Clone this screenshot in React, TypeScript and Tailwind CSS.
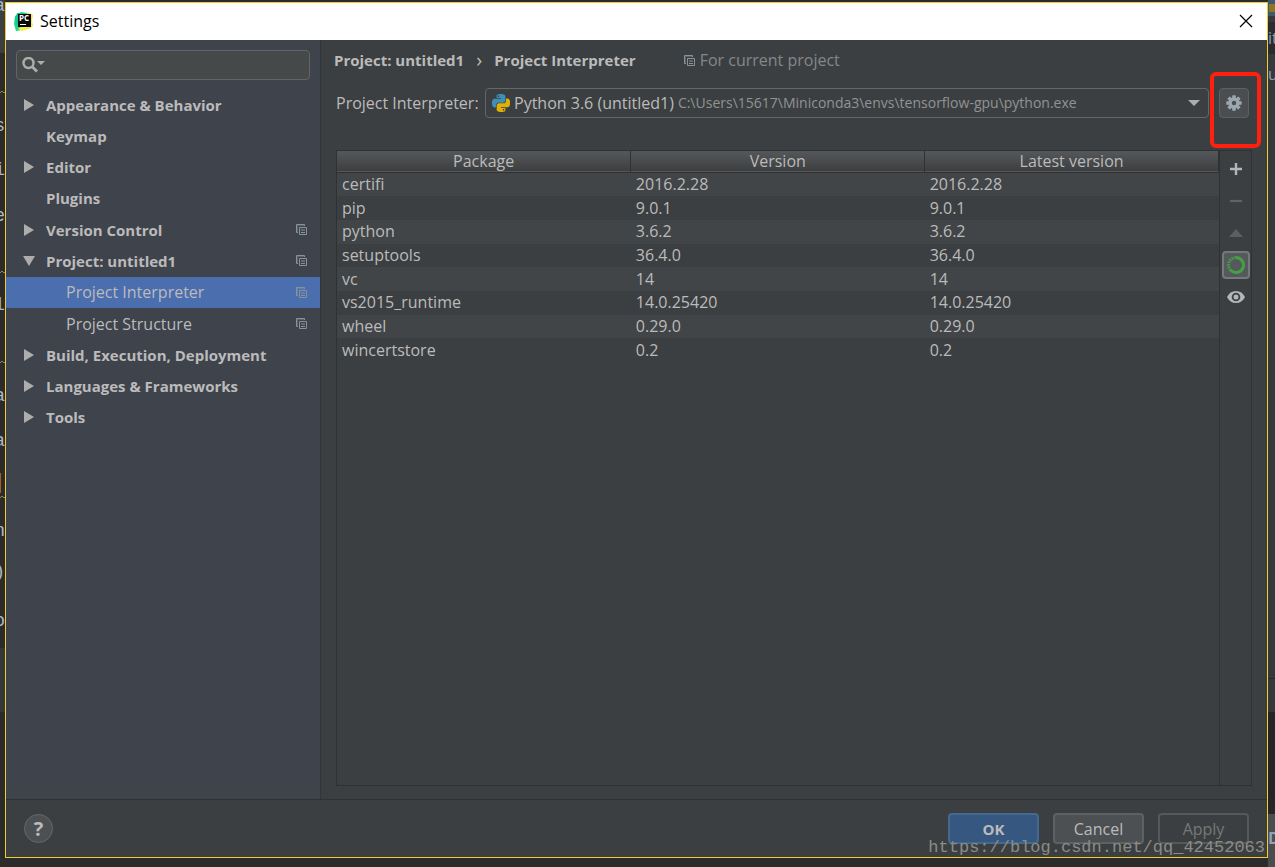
import { useState } from 'react';
import type { ReactNode } from 'react';

type TreeItem = {
  label: string;
  state?: 'open' | 'closed';
  child?: boolean;
  perProject?: boolean;
};

const tree: TreeItem[] = [
  { label: 'Appearance & Behavior', state: 'closed' },
  { label: 'Keymap' },
  { label: 'Editor', state: 'closed' },
  { label: 'Plugins' },
  { label: 'Version Control', state: 'closed', perProject: true },
  { label: 'Project: untitled1', state: 'open', perProject: true },
  { label: 'Project Interpreter', child: true, perProject: true },
  { label: 'Project Structure', child: true, perProject: true },
  { label: 'Build, Execution, Deployment', state: 'closed' },
  { label: 'Languages & Frameworks', state: 'closed' },
  { label: 'Tools', state: 'closed' },
];

const packages = [
  { name: 'certifi', version: '2016.2.28' },
  { name: 'pip', version: '9.0.1' },
  { name: 'python', version: '3.6.2' },
  { name: 'setuptools', version: '36.4.0' },
  { name: 'vc', version: '14' },
  { name: 'vs2015_runtime', version: '14.0.25420' },
  { name: 'wheel', version: '0.29.0' },
  { name: 'wincertstore', version: '0.2' },
];

// Bits of the editor window that stick out on the left of the dialog
const leftCode = [
  { text: 'a', top: 'top-[-6px]' },
  { text: 's', top: 'top-[114px]' },
  { text: 'i', top: 'top-[158px]' },
  { text: 'e', top: 'top-[204px]' },
  { text: 'l', top: 'top-[293px]' },
  { text: 'a', top: 'top-[384px]' },
  { text: 'a', top: 'top-[429px]' },
  { text: 'n', top: 'top-[519px]' },
  { text: ')', top: 'top-[560px]' },
  { text: 'o', top: 'top-[609px]' },
];

const squiggles = ['top-[90px]', 'top-[270px]', 'top-[360px]', 'top-[495px]'];

function PyCharmIcon() {
  return (
    <svg className="size-5 shrink-0" viewBox="0 0 20 20" aria-hidden="true">
      <path d="M1 5 7 1l7 1 2 8-8 9-6 1-2-7z" fill="#21d789" />
      <path d="m13 1 6 3-1 6 1 5-4 3-7 2-4-2 9-6z" fill="#f1ec4a" />
      <path d="M3 2h7l-5 8-2 6-2-8z" fill="#16c98a" />
      <rect x="4" y="3" width="13" height="13" fill="#050505" />
      <text x="5" y="10" fontSize="8" fontWeight="700" fill="#fff" fontFamily="Open Sans, sans-serif">
        PC
      </text>
      <rect x="6" y="13" width="6" height="1" fill="#fff" />
    </svg>
  );
}

function PythonIcon() {
  return (
    <svg className="size-[18px] shrink-0" viewBox="0 0 24 24" aria-hidden="true">
      <path
        fill="#3f8fb8"
        fillRule="evenodd"
        d="M14.25.18l.9.2.73.26.59.3.45.32.34.34.25.34.16.33.1.3.04.26.02.2-.01.13V8.5l-.05.63-.13.55-.21.46-.26.38-.3.31-.33.25-.35.19-.35.14-.33.1-.3.07-.26.04-.21.02H8.77l-.69.05-.59.14-.5.22-.41.27-.33.32-.27.35-.2.36-.15.37-.1.35-.07.32-.04.27-.02.21v3.06H3.17l-.21-.03-.28-.07-.32-.12-.35-.18-.36-.26-.36-.36-.35-.46-.32-.59-.28-.73-.21-.88-.14-1.05-.05-1.23.06-1.22.16-1.04.24-.87.32-.71.36-.57.4-.44.42-.33.42-.24.4-.16.36-.1.32-.05.24-.01h.16l.06.01h8.16v-.83H6.18l-.01-2.75-.02-.37.05-.34.11-.31.17-.28.25-.26.31-.23.38-.2.44-.18.51-.15.58-.12.64-.1.71-.06.77-.04.84-.02 1.27.05zm-6.3 1.98l-.23.33-.08.41.08.41.23.34.33.22.41.09.41-.09.33-.22.23-.34.08-.41-.08-.41-.23-.33-.33-.22-.41-.09-.41.09z"
      />
      <path
        fill="#dfb107"
        fillRule="evenodd"
        d="M21.1 6.11l.28.06.32.12.35.18.36.27.36.35.35.47.32.59.28.73.21.88.14 1.04.05 1.23-.06 1.23-.16 1.04-.24.86-.32.71-.36.57-.4.45-.42.33-.42.24-.4.16-.36.09-.32.05-.24.02-.16-.01h-8.22v.82h5.84l.01 2.76.02.36-.05.34-.11.31-.17.29-.25.25-.31.24-.38.2-.44.17-.51.15-.58.13-.64.09-.71.07-.77.04-.84.01-1.27-.04-1.07-.14-.9-.2-.73-.25-.59-.3-.45-.33-.34-.34-.25-.34-.16-.33-.1-.3-.04-.25-.02-.2.01-.13v-5.34l.05-.64.13-.54.21-.46.26-.38.3-.32.33-.24.35-.2.35-.14.33-.1.3-.06.26-.04.21-.02.13-.01h5.84l.69-.05.59-.14.5-.21.41-.28.33-.32.27-.35.2-.36.15-.36.1-.35.07-.32.04-.28.02-.21V6.07h2.09l.14.01zm-6.47 14.25l-.23.33-.08.41.08.41.23.33.33.23.41.08.41-.08.33-.23.23-.33.08-.41-.08-.41-.23-.33-.33-.23-.41-.08-.41.08z"
      />
    </svg>
  );
}

function CopyIcon() {
  return (
    <svg className="size-[11px] shrink-0" viewBox="0 0 11 11" fill="none" stroke="#87939a" aria-hidden="true">
      <path d="M2 8.5H.5v-8h8V2" />
      <path d="M1 1.5h7M1.5 2v6" opacity="0.4" />
      <path d="M3.5 3.5h7v7h-7z" />
      <path d="M5 6h4M5 8.5h4" />
    </svg>
  );
}

function Arrow({ open }: { open: boolean }) {
  return (
    <svg className="size-3 shrink-0" viewBox="0 0 12 12" fill="#adadad" aria-hidden="true">
      {open ? <path d="M0 1h12L6 11z" /> : <path d="M1 0v12l10-6z" />}
    </svg>
  );
}

function GearIcon() {
  return (
    <svg className="size-4" viewBox="0 0 16 16" aria-hidden="true">
      <g fill="#9aa7b0">
        {[0, 45, 90, 135].map((a) => (
          <rect key={a} x="6.2" y="0.3" width="3.6" height="15.4" rx="0.6" transform={`rotate(${a} 8 8)`} />
        ))}
        <circle cx="8" cy="8" r="5.6" />
      </g>
      <circle cx="8" cy="8" r="2.2" fill="#4a4e50" />
    </svg>
  );
}

function ToolButton({ label, active, children }: { label: string; active?: boolean; children: ReactNode }) {
  return (
    <button
      type="button"
      aria-label={label}
      className={`flex size-7 items-center justify-center rounded ${
        active ? 'border-2 border-[#75797b] bg-[#55595c]' : ''
      }`}
    >
      {children}
    </button>
  );
}

function Sidebar({ selected, onSelect }: { selected: string; onSelect: (label: string) => void }) {
  return (
    <aside className="w-[315px] shrink-0 border-r border-[#323436] bg-[#3f434c]">
      <label className="mx-2.5 mt-2.5 flex h-[30px] items-center gap-1 rounded border border-[#646464] bg-[#45494a] px-[5px]">
        <svg className="h-4 w-6 shrink-0" viewBox="0 0 24 16" aria-hidden="true">
          <circle cx="6.5" cy="6" r="5" fill="none" stroke="#adadad" strokeWidth="2.4" />
          <path d="m10 9.5 5 5" stroke="#adadad" strokeWidth="2.8" />
          <path d="M15 4h8l-4 4z" fill="#adadad" />
        </svg>
        <input type="text" aria-label="Search settings" className="min-w-0 flex-1 bg-transparent outline-none" />
      </label>
      <ul className="mt-[9px] grid h-[344px] auto-rows-fr">
        {tree.map((item) => {
          const active = item.label === selected;
          return (
            <li key={item.label} className="flex">
              <button
                type="button"
                onClick={() => onSelect(item.label)}
                className={`flex w-full items-center pr-[13px] text-left ${active ? 'bg-[#4b6eaf]' : ''} ${
                  item.child ? 'pl-[60px]' : 'pl-[17px] text-[15px] font-bold'
                }`}
              >
                {!item.child && (
                  <span className="flex w-[23px] shrink-0">{item.state && <Arrow open={item.state === 'open'} />}</span>
                )}
                <span className="flex-1 truncate">{item.label}</span>
                {item.perProject && <CopyIcon />}
              </button>
            </li>
          );
        })}
      </ul>
    </aside>
  );
}

function PackageTable() {
  return (
    <div className="flex-1 border border-[#2f3133]">
      <table className="h-[211px] w-full table-fixed border-collapse">
        <thead>
          <tr className="h-[21px] border-b border-[#2f3133] bg-linear-to-b from-[#55585a] to-[#3d3e40]">
            {['Package', 'Version', 'Latest version'].map((title) => (
              <th key={title} className="h-[21px] border-r border-[#2f3133] p-0 leading-5 font-normal">
                {title}
              </th>
            ))}
          </tr>
        </thead>
        <tbody>
          {packages.map((pkg) => (
            <tr key={pkg.name} className="leading-[23px] odd:bg-[#414547]">
              <td className="px-[5px] py-0">{pkg.name}</td>
              <td className="px-[5px] py-0">{pkg.version}</td>
              <td className="px-[5px] py-0">{pkg.version}</td>
            </tr>
          ))}
        </tbody>
      </table>
    </div>
  );
}

function PackageTools() {
  return (
    <div className="flex w-8 flex-col items-center gap-1 border border-l-0 border-[#2f3133] pt-1">
      <ToolButton label="Install">
        <svg className="size-3.5" viewBox="0 0 14 14" aria-hidden="true">
          <path d="M7 1v12M1 7h12" stroke="#b4b6b7" strokeWidth="2.4" />
        </svg>
      </ToolButton>
      <ToolButton label="Uninstall">
        <svg className="size-3.5" viewBox="0 0 14 14" aria-hidden="true">
          <path d="M1 7h12" stroke="#616466" strokeWidth="2.2" />
        </svg>
      </ToolButton>
      <ToolButton label="Upgrade">
        <svg className="h-2 w-3.5" viewBox="0 0 14 8" aria-hidden="true">
          <path d="M0 8h14L7 0z" fill="#5c5f61" />
        </svg>
      </ToolButton>
      <ToolButton label="Use Conda package manager" active>
        <svg className="size-5" viewBox="0 0 20 20" fill="none" stroke="#43a047" aria-hidden="true">
          <path d="M10 2.5a7.5 7.5 0 1 1-5.3 12.8" strokeWidth="3" />
          <path d="M4.7 15.3A7.5 7.5 0 0 1 10 2.5" strokeWidth="3" strokeDasharray="1.6 1" />
        </svg>
      </ToolButton>
      <ToolButton label="Show early releases">
        <svg className="h-3.5 w-[18px]" viewBox="0 0 18 14" aria-hidden="true">
          <path d="M0 7c2-4 5-6 9-6s7 2 9 6c-2 4-5 6-9 6s-7-2-9-6z" fill="#b4b6b7" />
          <circle cx="9" cy="7" r="3.4" fill="none" stroke="#3c3f41" strokeWidth="1.8" />
        </svg>
      </ToolButton>
    </div>
  );
}

function InterpreterPanel() {
  return (
    <main className="flex min-w-0 flex-1 flex-col pr-[15px] pb-[13px] pl-[13px]">
      <div className="flex h-10 items-center">
        <h1 className="flex items-center text-[15px] font-bold">
          <span>Project: untitled1</span>
          <span className="w-[30px] text-center text-xl leading-5 font-normal">›</span>
          <span>Project Interpreter</span>
        </h1>
        <p className="ml-12 flex items-center gap-[5px] text-[#84878a]">
          <CopyIcon />
          For current project
        </p>
      </div>

      <div className="mt-[7px] ml-0.5 flex h-[31px] items-center">
        <label htmlFor="interpreter" className="w-[149px] shrink-0">
          Project Interpreter:
        </label>
        <div className="flex h-[30px] min-w-0 flex-1 items-center rounded border border-[#646668] pr-2 pl-1.5">
          <PythonIcon />
          <select id="interpreter" className="ml-1 shrink-0 appearance-none field-sizing-content bg-transparent outline-none">
            <option>Python 3.6 (untitled1)</option>
          </select>
          <span className="ml-1 flex-1 truncate text-sm text-[#919394]">
            C:\Users\15617\Miniconda3\envs\tensorflow-gpu\python.exe
          </span>
          <svg className="h-1.5 w-3 shrink-0" viewBox="0 0 12 6" aria-hidden="true">
            <path d="M0 0h12L6 6z" fill="#adadad" />
          </svg>
        </div>
        <div className="relative mr-[3px] ml-2.5">
          <button
            type="button"
            aria-label="Interpreter settings"
            className="flex size-[30px] items-center justify-center rounded border border-[#5e6163] bg-[#4a4e50]"
          >
            <GearIcon />
          </button>
          {/* red marker round the gear */}
          <div className="pointer-events-none absolute -top-4 -left-[9px] h-[76px] w-[51px] rounded-md border-4 border-[#ff2010]" />
        </div>
      </div>

      <div className="mt-8 ml-0.5 flex flex-1">
        <PackageTable />
        <PackageTools />
      </div>
    </main>
  );
}

function Footer() {
  return (
    <footer className="flex h-[58px] shrink-0 items-center gap-3.5 border-t border-[#2f3133] px-[18px]">
      <button
        type="button"
        aria-label="Help"
        className="mr-auto flex size-[29px] items-center justify-center rounded-full border border-[#65696b] bg-[#4c5052] text-xl font-bold"
      >
        ?
      </button>
      <button type="button" className="h-[31px] w-[91px] rounded border-2 border-[#43698f] bg-[#365880] text-[15px] font-bold">
        OK
      </button>
      <button type="button" className="h-[31px] w-[91px] rounded border-2 border-[#5e6163] bg-[#4c5052]">
        Cancel
      </button>
      <button type="button" disabled className="h-[31px] w-[91px] rounded border-2 border-[#56595b] text-[#777]">
        Apply
      </button>
    </footer>
  );
}

function EditorBackdrop() {
  return (
    <div className="absolute inset-0 overflow-hidden bg-[#2b2b2b]" aria-hidden="true">
      <div className="absolute inset-y-0 left-0 w-[5px] overflow-hidden font-['Liberation_Mono',monospace] text-lg leading-6 text-[#a9b7c6]">
        <div className="absolute top-0 h-[53px] w-full bg-[#3c3f41]" />
        {leftCode.map((c) => (
          <span key={c.top} className={`absolute right-0 ${c.top}`}>
            {c.text}
          </span>
        ))}
        {squiggles.map((top) => (
          <svg key={top} className={`absolute left-0 h-1 w-[5px] ${top}`} viewBox="0 0 5 4">
            <path d="m0 3 2-2 2 2 1-1" fill="none" stroke="#8a8a55" />
          </svg>
        ))}
        <div className="absolute top-[473px] left-0 h-5 w-px bg-[#a5611f]" />
        <div className="absolute top-[648px] h-16 w-full bg-[#35383a]" />
      </div>
      <div className="absolute inset-y-0 right-0 w-[7px] overflow-hidden bg-[#36393b] text-[#8fa3b8]">
        <div className="absolute top-0 h-4 w-full bg-[#3d5a68]" />
        <div className="absolute top-1 right-0 h-2 w-1.5 bg-[#8f7424]" />
        <div className="absolute top-[22px] h-8 w-full bg-[#2b2b2d]" />
        <span className="absolute top-[26px] left-0">it</span>
        <span className="absolute top-[62px] left-0">un</span>
        <div className="absolute top-[678px] h-px w-full bg-[#2b2b2b]" />
        <div className="absolute top-[712px] h-[102px] w-full bg-[#262626]" />
        <div className="absolute top-[814px] bottom-0 w-full bg-[#4a4c4e]" />
        <span className="absolute top-[826px] left-0 font-bold">D</span>
      </div>
    </div>
  );
}

export default function App() {
  const [selected, setSelected] = useState('Project Interpreter');

  return (
    <div className="relative flex min-h-screen pt-0.5 pr-[7px] pb-[9px] pl-[5px] font-['Open_Sans',sans-serif] text-base leading-6 text-[#bbbbbb]">
      <EditorBackdrop />
      <div className="relative flex min-w-0 flex-1 flex-col border border-[#f2cb30] bg-[#3c3f41]">
        <header className="flex h-[37px] shrink-0 items-center bg-white pr-3.5 pb-0.5 pl-2 text-black">
          <PyCharmIcon />
          <span className="ml-1.5 flex-1">Settings</span>
          <button type="button" aria-label="Close">
            <svg className="size-3.5" viewBox="0 0 14 14" aria-hidden="true">
              <path d="m1 1 12 12M13 1 1 13" stroke="#000" strokeWidth="1.2" />
            </svg>
          </button>
        </header>
        <div className="flex flex-1">
          <Sidebar selected={selected} onSelect={setSelected} />
          <InterpreterPanel />
        </div>
        <Footer />
      </div>
      <p className="pointer-events-none absolute right-2.5 bottom-[7px] font-['Liberation_Mono',monospace] text-[17px] text-[#8b8c85]">
        https://blog.csdn.net/qq_42452063
      </p>
    </div>
  );
}
